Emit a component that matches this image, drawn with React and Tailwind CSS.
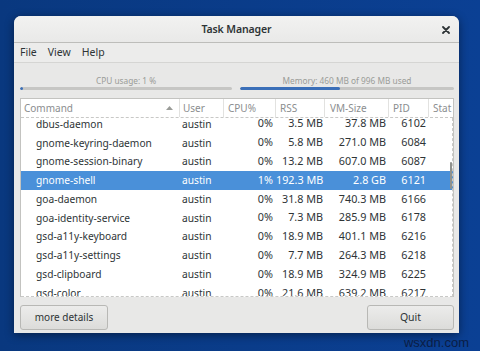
import React from "react";

const rows = [
  ["dbus-daemon", "austin", "0%", "3.5 MB", "37.8 MB", "6102"],
  ["gnome-keyring-daemon", "austin", "0%", "5.8 MB", "271.0 MB", "6084"],
  ["gnome-session-binary", "austin", "0%", "13.2 MB", "607.0 MB", "6087"],
  ["gnome-shell", "austin", "1%", "192.3 MB", "2.8 GB", "6121"],
  ["goa-daemon", "austin", "0%", "31.8 MB", "740.3 MB", "6166"],
  ["goa-identity-service", "austin", "0%", "7.3 MB", "285.9 MB", "6178"],
  ["gsd-a11y-keyboard", "austin", "0%", "18.9 MB", "401.1 MB", "6216"],
  ["gsd-a11y-settings", "austin", "0%", "7.7 MB", "264.3 MB", "6218"],
  ["gsd-clipboard", "austin", "0%", "18.9 MB", "324.9 MB", "6225"],
  ["gsd-color", "austin", "0%", "21.6 MB", "639.2 MB", "6217"],
];

const grid = "grid grid-cols-[159px_44px_52px_49px_64px_40px_1fr]";

export default function App() {
  return (
    <div
      className="relative w-[480px] h-[351px] overflow-hidden bg-gradient-to-r from-[#09387f] to-[#0b4094] pt-[16px] pl-[14px]"
      style={{ fontFamily: '"Noto Sans", "Open Sans", sans-serif' }}
    >
      <div className="w-[445px] h-[317px] rounded-t-[7px] bg-[#e8e8e7] flex flex-col shadow-[0_2px_10px_rgba(0,0,0,0.45)] overflow-hidden">
        {/* title bar */}
        <div className="relative h-[27px] shrink-0 border-b border-[#bdbdba] bg-gradient-to-b from-[#f2f2f1] to-[#e9e9e8] flex items-center justify-center">
          <span className="text-[10.5px] font-semibold tracking-[-0.1px] text-[#2e3436] leading-none">Task Manager</span>
          <svg className="absolute right-[9px] top-[10px]" width="8" height="8" viewBox="0 0 8 8">
            <path d="M1 1 L7 7 M7 1 L1 7" stroke="#2e3436" strokeWidth="1.8" strokeLinecap="round" />
          </svg>
        </div>
        {/* menu bar */}
        <div className="h-[20px] shrink-0 border-b border-[#d5d5d3] bg-[#ececeb] flex items-center pl-[6px] gap-[11px] text-[10.5px] text-[#2e3436] leading-none">
          <span>File</span>
          <span>View</span>
          <span>Help</span>
        </div>
        {/* body */}
        <div className="flex-1 flex flex-col pl-[6px] pr-[5px]">
          {/* progress */}
          <div className="h-[35px] shrink-0 pt-[12px] flex gap-[8px]">
            <div className="w-[212px] flex flex-col">
              <div className="h-[11px] text-[8.3px] leading-[11px] text-[#9a9c98] text-center">CPU usage: 1 %</div>
              <div className="mt-[1px] h-[3px] rounded-full bg-[#c6c6c4] overflow-hidden">
                <div className="h-full w-[3px] rounded-full bg-[#3b6fb8]" />
              </div>
            </div>
            <div className="flex-1 flex flex-col">
              <div className="h-[11px] text-[8.3px] leading-[11px] text-[#9a9c98] text-center">Memory: 460 MB of 996 MB used</div>
              <div className="mt-[1px] h-[3px] rounded-full bg-[#c6c6c4] overflow-hidden">
                <div className="h-full w-[100px] rounded-full bg-[#3b6fb8]" />
              </div>
            </div>
          </div>
          {/* table */}
          <div className="relative h-[199px] shrink-0 border border-[#c3c3c0] border-b-0 bg-white flex flex-col overflow-hidden">
            <div className={`${grid} h-[19px] shrink-0 border-b border-dashed border-[#c8c8c6] text-[10px] text-[#8b8e8f] leading-[18px]`}>
              <div className="relative pl-[3px] border-r border-[#e2e2e0]">
                Command
                <svg className="absolute left-[145px] top-[7px]" width="7" height="4" viewBox="0 0 7 4">
                  <path d="M0 4 L3.5 0 L7 4 Z" fill="#9a9c98" />
                </svg>
              </div>
              <div className="pl-[3px] border-r border-[#e2e2e0]">User</div>
              <div className="pl-[4px] border-r border-[#e2e2e0]">CPU%</div>
              <div className="pl-[4px] border-r border-[#e2e2e0]">RSS</div>
              <div className="pl-[5px] border-r border-[#e2e2e0]">VM-Size</div>
              <div className="pl-[4px] border-r border-[#e2e2e0]">PID</div>
              <div className="pl-[4px] whitespace-nowrap">Stat</div>
            </div>
            <div className="flex-1 overflow-hidden border-b border-dashed border-[#c8c8c6]">
              <div className="mt-[-3.6px]">
                {rows.map((r, i) => {
                  const sel = i === 3;
                  return (
                    <div
                      key={i}
                      className={`${grid} h-[18.8px] items-center leading-none whitespace-nowrap ${
                        sel ? "bg-[#4a90d9] text-white" : "text-[#2e3436]"
                      }`}
                    >
                      <div className="pl-[15px] text-[10.2px]">{r[0]}</div>
                      <div className="pl-[2px] text-[10.2px]">{r[1]}</div>
                      <div className="text-right pr-[3px] text-[10.8px]">{r[2]}</div>
                      <div className="text-right pr-[2px] text-[10.8px]">{r[3]}</div>
                      <div className="text-right pr-[3px] text-[10.8px]">{r[4]}</div>
                      <div className="text-right pr-[3px] text-[10.8px]">{r[5]}</div>
                      <div />
                    </div>
                  );
                })}
              </div>
            </div>
            <div className="absolute right-0 top-[19px] bottom-0 border-r border-dashed border-[#c8c8c6]" />
            <div className="absolute right-[1px] top-[63px] h-[27px] w-[2px] rounded-full bg-[#8f918d]" />
          </div>
          {/* buttons */}
          <div className="mt-[8px] h-[25px] shrink-0 flex justify-between">
            <div className="w-[88px] h-full rounded-[3px] border border-[#b8b8b5] bg-gradient-to-b from-[#ececeb] to-[#dcdcda] flex items-center justify-center text-[10px] text-[#2e3436]">
              more details
            </div>
            <div className="w-[87px] h-full rounded-[3px] border border-[#b8b8b5] bg-gradient-to-b from-[#ececeb] to-[#dcdcda] flex items-center justify-center text-[10.5px] text-[#2e3436]">
              Quit
            </div>
          </div>
        </div>
      </div>
      <div
        className="absolute right-[11px] bottom-[2px] text-[13px] leading-none text-[#0a1d45]"
        style={{ fontFamily: '"Liberation Sans", Arial, sans-serif' }}
      >
        wsxdn.com
      </div>
    </div>
  );
}
